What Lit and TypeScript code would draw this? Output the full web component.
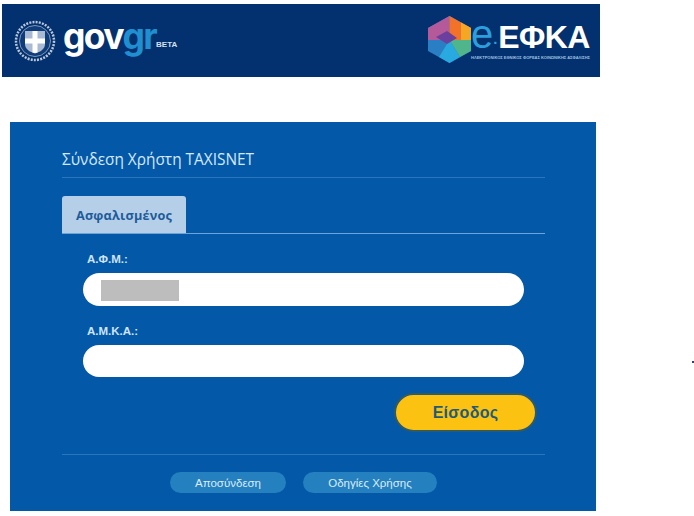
import { LitElement, html, css } from "lit";
import { customElement } from "lit/decorators.js";

@customElement("app-root")
export class AppRoot extends LitElement {
  static styles = css`
    :host {
      display: block;
      position: relative;
      width: 694px;
      height: 516px;
      background: #fff;
      overflow: hidden;
      font-family: "Liberation Sans", Arial, sans-serif;
      box-sizing: border-box;
      padding: 4px 0 0 2px;
    }
    .header {
      width: 598px;
      height: 73px;
      background: #03306f;
      display: flex;
      align-items: center;
      justify-content: space-between;
      padding: 0 10px 0 12px;
      box-sizing: border-box;
    }
    .brand, .efka { display: flex; align-items: center; }
    .emblem { width: 42px; height: 42px; flex: none; filter: blur(0.4px); }
    .gov {
      font-family: Inter, "Liberation Sans", sans-serif;
      font-weight: 700;
      font-size: 35.5px;
      letter-spacing: -1.6px;
      line-height: 40px;
      color: #fff;
      margin: -8px 0 0 7px;
    }
    .gov span { color: #1f8fd0; }
    .beta {
      font-size: 8px;
      font-weight: 700;
      color: #d5e2f0;
      margin: 8px 0 0 0;
    }
    .hex { width: 43px; height: 47px; flex: none; margin-top: -3px; filter: blur(0.5px); }
    .efka-text { display: flex; flex-direction: column; }
    .efka-name {
      font-size: 32px;
      line-height: 33px;
      font-weight: 700;
      color: #fff;
      white-space: nowrap;
      letter-spacing: -0.6px;
    }
    .efka-name i {
      font-style: normal;
      font-weight: 400;
      color: #2b9fdc;
      font-size: 40px;
      line-height: 1px;
      letter-spacing: 0;
    }
    .efka-name b { font-weight: 700; color: #2b9fdc; font-size: 15px; line-height: 1px; letter-spacing: 0; }
    .efka-sub {
      font-size: 4px;
      line-height: 6px;
      color: #9fc0e0;
      white-space: nowrap;
      font-weight: 700;
      margin-top: 1px;
    }
    .panel {
      width: 586px;
      height: 389px;
      margin: 45px 0 0 8px;
      background: #0358a8;
      padding: 0 51px 0 52px;
      box-sizing: border-box;
      display: flex;
      flex-direction: column;
    }
    .title {
      font-family: "Open Sans", "Liberation Sans", sans-serif;
      font-size: 15.4px;
      line-height: 20px;
      color: #d4e8fa;
      padding: 28px 0 7px;
      border-bottom: 1px solid #2a76bc;
    }
    .tabs {
      margin-top: 18px;
      height: 38px;
      box-sizing: border-box;
      border-bottom: 1px solid #6ea3d8;
    }
    .tab {
      width: 124px;
      height: 37px;
      background: #b6cfe9;
      color: #1d5c99;
      font-family: "Open Sans", "Liberation Sans", sans-serif;
      font-weight: 700;
      font-size: 12.7px;
      border-radius: 3px 3px 0 0;
      display: flex;
      align-items: center;
      justify-content: center;
      letter-spacing: 0.2px;
    }
    .form {
      display: flex;
      flex-direction: column;
      padding: 0 21px;
    }
    label {
      display: block;
      color: #cfe4f7;
      font-size: 11.5px;
      font-weight: 700;
      line-height: 14px;
      padding-left: 4px;
      margin: 18px 0 7px;
    }
    .input {
      height: 33px;
      background: #fff;
      border-radius: 17px;
      display: flex;
      align-items: center;
      padding-left: 18px;
    }
    .mask { width: 78px; height: 21px; background: #bdbdbd; margin-top: 2px; }
    .input.b { height: 32px; }
    .actions { display: flex; justify-content: flex-end; margin: 16px -13px 0 0; }
    .login {
      width: 143px;
      height: 39px;
      box-sizing: border-box;
      border: 2px solid #2f5a68;
      border-radius: 20px;
      background: #fcc212;
      color: #1f5b78;
      font-size: 16px;
      font-weight: 700;
      display: flex;
      align-items: center;
      justify-content: center;
      letter-spacing: 0.3px;
    }
    .foot {
      margin-top: 22px;
      border-top: 1px solid #2a76bc;
      padding: 17px 0 0 108px;
      display: flex;
      gap: 17px;
    }
    .pill {
      height: 21px;
      border-radius: 11px;
      background: #2480bf;
      color: #dbecf9;
      font-size: 11.5px;
      display: flex;
      align-items: center;
      justify-content: center;
    }
    .pill.a { width: 116px; }
    .pill.c { width: 134px; }
    .stray {
      position: absolute;
      left: 692px;
      top: 361px;
      width: 2px;
      height: 2px;
      background: #2a3f8a;
    }
  `;

  render() {
    return html`
      <div class="header">
        <div class="brand">
          <svg class="emblem" viewBox="0 0 42 42">
            <circle cx="21" cy="21" r="19" fill="none" stroke="#b9c7da" stroke-width="2.5" stroke-dasharray="2 1.2" />
            <circle cx="21" cy="21" r="15.5" fill="#0f3c7a" stroke="#7f96b8" stroke-width="1" />
            <path d="M11 11h20v13c0 5-4.5 8-10 9.5-5.500-1.500-10-4.500-10-9.500z" fill="#a9bad2" />
            <path d="M18.500 11h5v7.500h7.500v5h-7.500v9l-2.500.5-2.500-.5v-9h-7.500v-5h7.500z" fill="#fff" />
          </svg>
          <div class="gov">gov<span>gr</span></div>
          <div class="beta">BETA</div>
        </div>
        <div class="efka">
          <svg class="hex" viewBox="0 0 43 47">
            <path d="M21.500 0 43 12 43 35 21.500 47 0 35 0 12z" fill="#2a7fc4" />
            <path d="M21.500 0 0 12 0 24 21.500 24z" fill="#b45a9a" />
            <path d="M21.500 0 43 12 43 24 21.500 24z" fill="#f2722a" />
            <path d="M33 6.500 43 12 43 26 33 24z" fill="#f5a623" />
            <path d="M21.500 24 43 24 43 35 32 41z" fill="#4fb58a" />
            <path d="M21.500 24 32 41 21.500 47 11 41z" fill="#28a9e0" />
            <path d="M8 21 19 15 29 22 19 28z" fill="#6b3f9e" />
          </svg>
          <div class="efka-text">
            <div class="efka-name"><i>e</i><b>·</b>ΕΦΚΑ</div>
            <div class="efka-sub">ΗΛΕΚΤΡΟΝΙΚΟΣ ΕΘΝΙΚΟΣ ΦΟΡΕΑΣ ΚΟΙΝΩΝΙΚΗΣ ΑΣΦΑΛΙΣΗΣ</div>
          </div>
        </div>
      </div>
      <div class="panel">
        <div class="title">Σύνδεση Χρήστη TAXISNET</div>
        <div class="tabs"><div class="tab">Ασφαλισμένος</div></div>
        <div class="form">
          <label>Α.Φ.Μ.:</label>
          <div class="input"><div class="mask"></div></div>
          <label>Α.Μ.Κ.Α.:</label>
          <div class="input b"></div>
          <div class="actions"><div class="login">Είσοδος</div></div>
        </div>
        <div class="foot">
          <div class="pill a">Αποσύνδεση</div>
          <div class="pill c">Οδηγίες Χρήσης</div>
        </div>
      </div>
      <div class="stray"></div>
    `;
  }
}
